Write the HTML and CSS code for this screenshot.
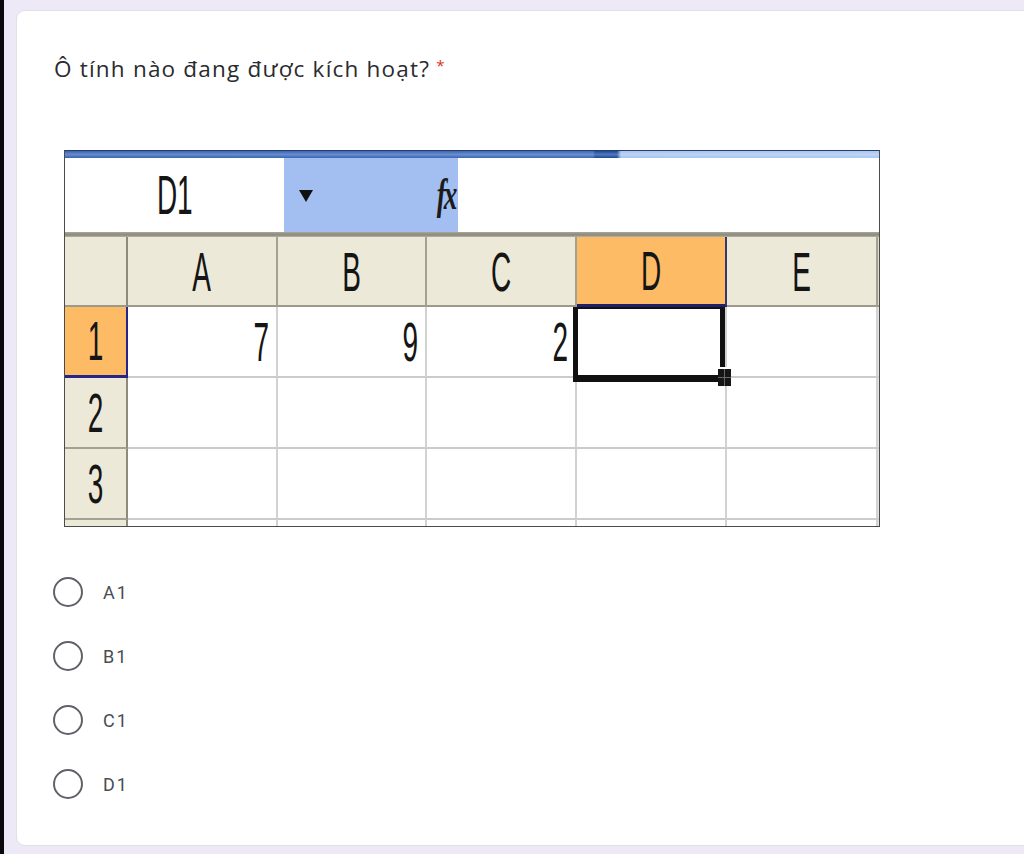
FILE: index.html
```html
<!DOCTYPE html>
<html lang="vi">
<head>
<meta charset="utf-8">
<title>Ô tính nào đang được kích hoạt?</title>
<link rel="stylesheet" href="styles.css">
</head>
<body>
<div class="screen">
  <div class="edge"></div>
  <div class="page">
    <div class="card">
      <div class="question">Ô tính nào đang được kích hoạt? <span class="req">*</span></div>
      <div class="sheet">
        <div class="titlebar"></div>
        <div class="formula">
          <div class="namebox"><span class="xl">D1</span></div>
          <div class="fxarea"><span class="arrow"></span><span class="fx">fx</span></div>
          <div class="input"></div>
        </div>
        <div class="sep"></div>
        <div class="grid">
          <div class="hd corner"></div>
          <div class="hd col"><span class="xl">A</span></div>
          <div class="hd col"><span class="xl">B</span></div>
          <div class="hd col"><span class="xl">C</span></div>
          <div class="hd col act"><span class="xl">D</span></div>
          <div class="hd col"><span class="xl">E</span></div>
          <div class="hd fill"></div>

          <div class="rh act"><span class="xl">1</span></div>
          <div class="cell num"><span class="xl">7</span></div>
          <div class="cell num"><span class="xl">9</span></div>
          <div class="cell num"><span class="xl">2</span></div>
          <div class="cell active"><div class="selection"></div><div class="handle"></div></div>
          <div class="cell"></div>
          <div class="cell fill"></div>

          <div class="rh"><span class="xl">2</span></div>
          <div class="cell"></div>
          <div class="cell"></div>
          <div class="cell"></div>
          <div class="cell"></div>
          <div class="cell"></div>
          <div class="cell fill"></div>

          <div class="rh"><span class="xl">3</span></div>
          <div class="cell"></div>
          <div class="cell"></div>
          <div class="cell"></div>
          <div class="cell"></div>
          <div class="cell"></div>
          <div class="cell fill"></div>

          <div class="rh part"></div>
          <div class="cell part"></div>
          <div class="cell part"></div>
          <div class="cell part"></div>
          <div class="cell part"></div>
          <div class="cell part"></div>
          <div class="cell part fill"></div>
        </div>
      </div>
      <div class="options">
        <label class="opt"><span class="radio"></span><span class="lbl">A1</span></label>
        <label class="opt"><span class="radio"></span><span class="lbl">B1</span></label>
        <label class="opt"><span class="radio"></span><span class="lbl">C1</span></label>
        <label class="opt"><span class="radio"></span><span class="lbl">D1</span></label>
      </div>
    </div>
  </div>
</div>
</body>
</html>
```

FILE: styles.css
```css
html, body {
  margin: 0;
  padding: 0;
}
body {
  background: #ede9f6;
  width: 1024px;
  height: 854px;
  overflow: hidden;
}
.screen {
  display: flex;
  height: 854px;
}
.edge {
  width: 4px;
  flex: none;
  background: #0a0a0c;
}
.page {
  flex: 1;
  overflow: hidden;
  padding: 10px 0 0 12px;
}
.card {
  background: #ffffff;
  border: 1px solid #e2e0e8;
  border-radius: 9px;
  margin-right: -30px;
  height: 836px;
  box-sizing: border-box;
  padding: 45px 0 0 37px;
}
.question {
  font-family: "Open Sans", "Noto Sans", sans-serif;
  font-size: 22.5px;
  line-height: 26px;
  height: 26px;
  color: #2a2b2e;
  letter-spacing: 1.2px;
}
.req {
  color: #d93025;
  font-size: 15px;
  line-height: 0;
  vertical-align: 6px;
  letter-spacing: 0;
  margin-left: -1px;
}
.sheet {
  margin: 68px 0 0 10px;
  width: 816px;
  box-sizing: border-box;
  border: 1px solid #4b4b4b;
  border-top-color: #2c3c6a;
  background: #fff;
}
.titlebar {
  height: 7px;
  background:
    linear-gradient(to bottom, rgba(255,255,255,0) 0, rgba(255,255,255,0.25) 50%, rgba(255,255,255,0) 100%),
    linear-gradient(to right, #3564b4 0, #3a6abb 528px, #1a4a9e 530px, #1a4a9e 552px, #a6c4ef 556px, #a9c7f1 100%);
}
.formula {
  display: flex;
  height: 74px;
}
.namebox {
  width: 219px;
  flex: none;
  display: flex;
  align-items: center;
  justify-content: center;
  background: #fff;
}
.fxarea {
  width: 174px;
  flex: none;
  background: #a3bff1;
  display: flex;
  align-items: center;
  justify-content: space-between;
  padding: 0 4px 0 15px;
  box-sizing: border-box;
}
.arrow {
  width: 0;
  height: 0;
  border-left: 7px solid transparent;
  border-right: 7px solid transparent;
  border-top: 12px solid #111;
  margin-top: 2px;
}
.fx {
  font-family: "Liberation Serif", serif;
  font-style: italic;
  font-weight: bold;
  font-size: 44px;
  line-height: 1;
  color: #1b1b1b;
  display: inline-block;
  transform: scaleX(0.62);
  transform-origin: right center;
  margin-right: -2px;
  letter-spacing: -3px;
}
.input {
  flex: 1;
  background: #fff;
}
.sep {
  height: 5px;
  background: linear-gradient(to bottom, #a8a699, #8a887a 60%, #b7b5a8);
}
.grid {
  display: grid;
  grid-template-columns: 63px 150px 149px 150px 150px 151px 1fr;
  grid-template-rows: 70px 71px 71px 71px 6px;
}
.grid > div {
  box-sizing: border-box;
}
.xl {
  font-family: "Liberation Sans", Arial, sans-serif;
  font-size: 56px;
  line-height: 1;
  color: #151515;
  display: inline-block;
  transform: scaleX(0.5);
}
.hd {
  background: #ece9d8;
  border-right: 2px solid #a3a190;
  border-bottom: 2px solid #9c9a8a;
  display: flex;
  align-items: center;
  justify-content: center;
  padding-top: 1px;
}
.hd.corner {
  border-right-color: #8d8b7c;
}
.hd.fill {
  border-right: none;
  background: #dcd9c8;
}
.hd.act {
  background: #fdbb66;
  border-bottom: 3px solid #201f6a;
  border-right-color: #3a3870;
}
.rh {
  background: #ece9d8;
  border-right: 2px solid #8d8b7c;
  border-bottom: 2px solid #a3a190;
  display: flex;
  align-items: center;
  justify-content: center;
}
.rh.act {
  background: #fdbb66;
  border-bottom: 3px solid #26258a;
  border-right-color: #26258a;
}
.cell {
  background: #fff;
  border-right: 2px solid #d2d2d2;
  border-bottom: 2px solid #cbcbcb;
  position: relative;
}
.cell.fill {
  border-right: none;
  background: #e4e4e4;
}
.cell.part, .rh.part {
  border-bottom: none;
}
.cell.active {
  z-index: 2;
}
.num {
  display: flex;
  align-items: center;
  justify-content: flex-end;
  padding-right: 7px;
}
.num .xl {
  transform-origin: right center;
}
.selection {
  position: absolute;
  left: -4px;
  top: 0;
  width: 152px;
  height: 75px;
  box-sizing: border-box;
  border: 5px solid #111;
  border-top-width: 2px;
  border-bottom-width: 7px;
}
.handle {
  position: absolute;
  left: 141px;
  top: 60px;
  width: 13px;
  height: 17px;
  background:
    linear-gradient(to right, transparent 6px, #666 6px, #666 7px, transparent 7px),
    linear-gradient(to bottom, transparent 8px, #666 8px, #666 9px, transparent 9px),
    #151515;
  border-top: 2px solid #fff;
}
.options {
  margin-top: 33px;
  display: flex;
  flex-direction: column;
}
.opt {
  height: 64px;
  display: flex;
  align-items: center;
  gap: 20px;
}
.radio {
  width: 30px;
  height: 30px;
  box-sizing: border-box;
  border: 2.5px solid #5f6368;
  border-radius: 50%;
  margin-left: -1px;
}
.lbl {
  font-family: Roboto, "Noto Sans", sans-serif;
  font-size: 18px;
  font-weight: 400;
  letter-spacing: 2px;
  color: #4a4d51;
}
```
